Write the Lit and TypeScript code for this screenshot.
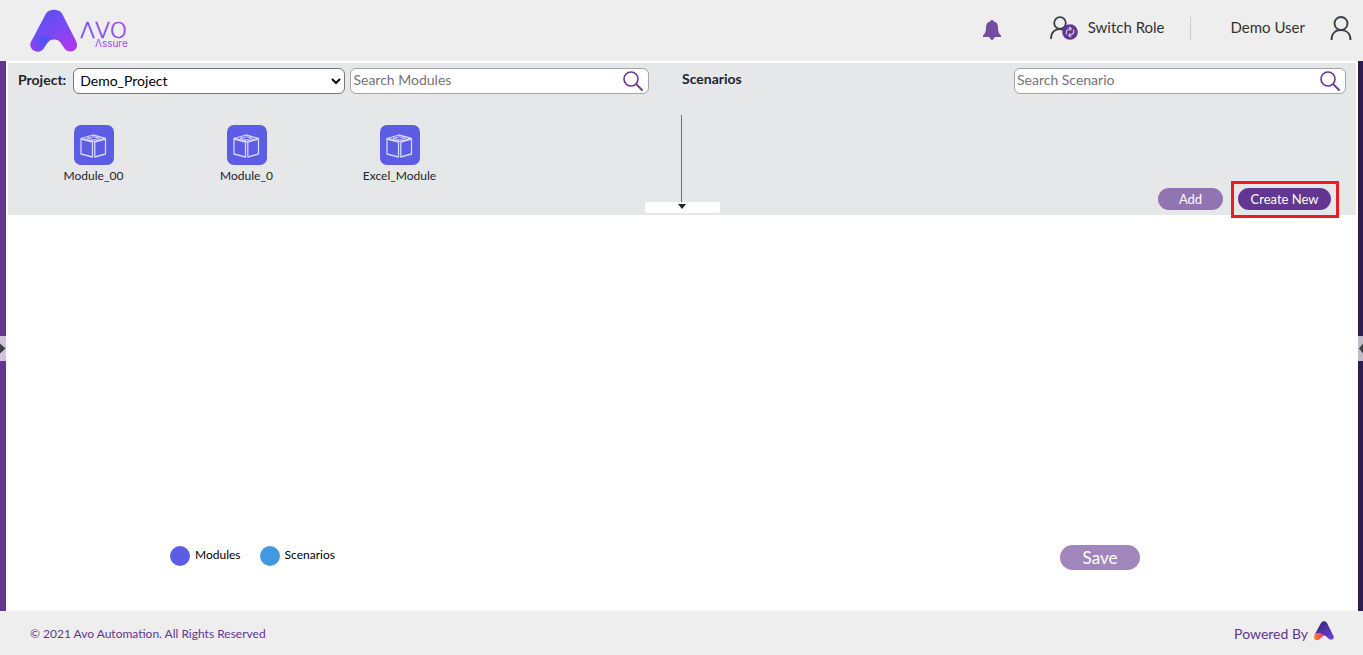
import { LitElement, html, css, svg } from "lit";
import { customElement, property } from "lit/decorators.js";

const searchIcon = svg`<svg class="glass" viewBox="0 0 20 20" width="20" height="20" aria-hidden="true">
  <circle cx="8" cy="8" r="7" fill="none" stroke="#633691" stroke-width="1.6" />
  <path d="M13.2 13.2L19 19" stroke="#633691" stroke-width="1.8" stroke-linecap="round" />
</svg>`;

@customElement("search-box")
export class SearchBox extends LitElement {
  @property() label = "";

  static styles = css`
    :host { display: block; }
    .box {
      display: flex;
      align-items: center;
      height: 26px;
      box-sizing: border-box;
      padding: 0 5px 0 2px;
      border: 1px solid #a5a5a5;
      border-radius: 6px;
      background: #fff;
    }
    input {
      flex: 1;
      min-width: 0;
      padding: 0 0 2px;
      border: 0;
      outline: 0;
      background: none;
      font: 14px/22px Lato, sans-serif;
      color: #212529;
    }
    input::placeholder { color: #757575; opacity: 1; }
    button { display: flex; padding: 0; border: 0; background: none; }
  `;

  render() {
    return html`<div class="box">
      <input type="text" aria-label=${this.label} placeholder=${this.label} />
      <button aria-label="Search">${searchIcon}</button>
    </div>`;
  }
}

@customElement("module-tile")
export class ModuleTile extends LitElement {
  @property() name = "";

  static styles = css`
    :host { display: block; }
    button {
      display: flex;
      flex-direction: column;
      align-items: center;
      width: 100%;
      padding: 0;
      border: 0;
      background: none;
      font: 12px/22px Lato, sans-serif;
      color: #212529;
    }
    svg { display: block; }
  `;

  render() {
    return html`<button>
      <svg viewBox="0 0 40 40" width="40" height="40" aria-hidden="true">
        <rect width="40" height="40" rx="7" fill="#5c5ce5" />
        <g fill="none" stroke="#d5d5f7" stroke-width="1.300" stroke-linejoin="round">
          <path d="M7 13.500L19 10l12.500 3.500L20 16.500z" />
          <path d="M13 13.300L19.500 11.800l6 1.500-5.800 1.500z" stroke-width="0.9" />
          <path d="M7 14v15l11.500 3V17z" />
          <path d="M31.500 14v15L20.800 32V17z" />
        </g>
      </svg>
      <span>${this.name}</span>
    </button>`;
  }
}

@customElement("app-root")
export class AppRoot extends LitElement {
  private modules = ["Module_00", "Module_0", "Excel_Module"];

  static styles = css`
    :host {
      display: flex;
      flex-direction: column;
      min-height: 100vh;
      font-family: Lato, sans-serif;
      font-size: 14px;
      color: #212529;
      background: #fff;
    }
    * { box-sizing: border-box; }
    button { font-family: inherit; border: 0; cursor: pointer; }

    .header {
      display: flex;
      align-items: center;
      justify-content: space-between;
      height: 61px;
      padding: 0 11px 0 29px;
      background: #eee;
    }
    .logo, .icon { display: block; }
    .tools { display: flex; align-items: center; padding-bottom: 5px; }
    .tool {
      display: flex;
      align-items: center;
      gap: 10px;
      padding: 0;
      background: none;
      font-size: 15px;
      line-height: 24px;
      color: #333;
    }
    .bell { margin: 4px 49px 0 0; }
    .rule { width: 1px; height: 23px; margin: 0 40px 0 25px; background: #ccc; }
    .user { gap: 25px; }
    .label { padding-bottom: 2px; }

    .body {
      flex: 1;
      display: flex;
      background: linear-gradient(90deg, #643693, #2f1c4f);
    }
    .rail { position: relative; flex: none; width: 6px; }
    .rail.right { width: 5px; }
    .handle {
      position: absolute;
      top: 50%;
      left: 0;
      width: 100%;
      height: 25px;
      padding: 0;
      background: rgba(255, 255, 255, 0.7);
    }
    .handle svg { display: block; width: 100%; height: 11px; }
    .main {
      flex: 1;
      min-width: 0;
      display: flex;
      flex-direction: column;
      padding: 2px 2px 0;
      background: #fff;
    }

    .panel {
      position: relative;
      display: grid;
      grid-template-columns: 1fr 1fr;
      height: 152px;
      background: #e5e7e9;
    }
    .bar { display: flex; align-items: center; height: 26px; margin-top: 5px; }
    .modules .bar { padding: 0 33px 0 10px; }
    .modules label { font-weight: 700; line-height: 20px; margin-right: 7px; padding-bottom: 2px; }
    .select {
      flex: 272 1 0;
      min-width: 0;
      height: 26px;
      margin-right: 5px;
      padding: 0 2px 2px;
      border: 1px solid #767676;
      border-radius: 6px;
      background-color: #fff;
      font: 14px Lato, sans-serif;
      color: #000;
    }
    .modules search-box { flex: 305 1 0; min-width: 0; }
    .tiles {
      display: grid;
      grid-template-columns: repeat(auto-fill, 153px);
      padding: 31px 0 0 9px;
    }
    .scenarios { display: flex; flex-direction: column; padding-right: 10px; }
    .scenarios .bar { justify-content: space-between; }
    .title { margin: 0; padding-bottom: 4px; font-size: 14px; line-height: 20px; font-weight: 700; }
    .scenarios search-box { width: 332px; }
    .lower {
      flex: 1;
      display: flex;
      align-items: flex-end;
      justify-content: flex-end;
      gap: 8px;
      margin: 21px 0 -3px -1px;
      padding-right: 7px;
      background: linear-gradient(#707070, #707070) 0 0 / 1px 88px no-repeat;
    }
    .pill {
      height: 22px;
      padding: 0;
      border-radius: 12px;
      background: #633691;
      font-size: 13px;
      line-height: 22px;
      color: #fff;
    }
    .add { width: 65px; margin-bottom: 8px; background: #9274b3; }
    .create { width: 93px; }
    .frame { display: flex; padding: 4px 5px 5px 4px; border: 3px solid #ed1c24; }
    .fold {
      position: absolute;
      left: 50%;
      bottom: 2px;
      width: 75px;
      height: 11px;
      margin-left: -37px;
      padding: 0 2px 2px 0;
      border-radius: 2px;
      background: #fff;
    }
    .fold svg { display: block; margin: auto; }

    .canvas {
      flex: 1;
      display: flex;
      align-items: flex-end;
      justify-content: space-between;
      padding: 0 216px 41px 162px;
    }
    .legend {
      display: flex;
      gap: 19px;
      margin: 0;
      padding: 0 0 4px;
      list-style: none;
      font-size: 12px;
      line-height: 18px;
      color: #000;
    }
    .legend li { display: flex; gap: 5px; }
    .dot { width: 20px; height: 20px; border-radius: 50%; background: #5c5ce5; }
    .dot.blue { background: #4299e1; }
    .save {
      width: 80px;
      height: 25px;
      padding: 0;
      border-radius: 13px;
      background: #a186bb;
      font-size: 17px;
      line-height: 24px;
      color: #fff;
    }

    .footer {
      display: flex;
      align-items: center;
      justify-content: space-between;
      height: 44px;
      padding: 0 28px 0 30px;
      background: #eee;
      font-size: 12px;
      color: #633691;
    }
    .powered { display: flex; align-items: center; gap: 5px; font-size: 14px; }
    .powered svg { margin-bottom: 5px; }
  `;

  render() {
    return html`
      <header class="header">
        <svg class="logo" viewBox="0 0 102 46" width="102" height="46" role="img" aria-label="Avo Assure">
          <defs>
            <linearGradient id="mark" x1="0.2" y1="0" x2="0.9" y2="1">
              <stop offset="0" stop-color="#5a50f5" />
              <stop offset="0.5" stop-color="#7a49f3" />
              <stop offset="1" stop-color="#b336f2" />
            </linearGradient>
            <linearGradient id="fold" x1="0" y1="0.7" x2="1" y2="0.3">
              <stop offset="0" stop-color="#963ff5" />
              <stop offset="0.6" stop-color="#4b55f5" />
              <stop offset="1" stop-color="#7a49f3" />
            </linearGradient>
            <linearGradient id="word" x1="0" y1="0" x2="1" y2="0">
              <stop offset="0" stop-color="#6a4cec" />
              <stop offset="1" stop-color="#a23cf0" />
            </linearGradient>
          </defs>
          <path fill="url(#mark)" d="M17 5.500C20 .5 30 .5 33 5.500L47 33c3 6-1 10.500-5.500 10.500-3 0-4.500-1-6-3l-4-6c-3-4.500-10-4.500-13 0l-4 6c-1.500 2-3 3-6 3-5 0-9-5-6-10.500z" />
          <path fill="url(#fold)" d="M6 28c8-1.500 18 0 23 4-4-1.500-8-1-10.500 2.500l-4 6c-1.500 2-3 3-6 3-5 0-9-5-6-10.500z" />
          <text x="51" y="30" font-family="DejaVu Sans, sans-serif" font-weight="200" font-size="22" fill="url(#word)" stroke="url(#word)" stroke-width="0.6">ΛVO</text>
          <text x="66" y="39" font-family="Inter, sans-serif" font-size="10" fill="#a04bef">Λssure</text>
        </svg>
        <div class="tools">
          <button class="tool bell" aria-label="Notifications">
            <svg class="icon" viewBox="0 0 18 20" width="18" height="20">
              <path fill="#764ba2" d="M9 0c1 0 1.600.6 1.800 1.400C13.800 2 15 4.500 15 7c0 4.500.8 6.500 3 8.500V17h-6.200C11 18 10 20 9 20s-2-2-2.800-3H0v-1.500C2.200 13.500 3 11.500 3 7c0-2.500 1.200-5 4.200-5.600C7.400.6 8 0 9 0z" />
            </svg>
          </button>
          <button class="tool">
            <svg class="icon" viewBox="0 0 28 24" width="28" height="24" aria-hidden="true">
              <g fill="none" stroke="#3b4048" stroke-width="1.800">
                <circle cx="10" cy="7" r="5.800" />
                <path d="M1 23c0-7 4-10 9-10 3 0 5 1 7 3" />
              </g>
              <circle cx="20" cy="16" r="7.800" fill="#633691" />
              <g fill="none" stroke="#d9c9ea" stroke-width="1.200">
                <path d="M16.500 18.500c-1-3 .5-5.500 4.500-6m-2-1.500l2.200 1.400-1.400 2.200" />
                <path d="M23.500 13.500c1 3-.5 5.500-4.500 6m2 1.500l-2.200-1.400 1.400-2.200" />
              </g>
            </svg>
            <span class="label">Switch Role</span>
          </button>
          <span class="rule"></span>
          <button class="tool user">
            <span class="label">Demo User</span>
            <svg class="icon" viewBox="0 0 22 24" width="22" height="24" aria-hidden="true">
              <g fill="none" stroke="#3b4048" stroke-width="1.900">
                <circle cx="11" cy="7.500" r="6.500" />
                <path d="M1.500 24c0-6.500 4-10 9.500-10s9.500 3.500 9.500 10" />
              </g>
            </svg>
          </button>
        </div>
      </header>

      <div class="body">
        <div class="rail">
          <button class="handle" aria-label="Open left bar">
            <svg viewBox="0 0 6 11"><path d="M0 0.500L5.500 5.500 0 10.500z" fill="#404040" /></svg>
          </button>
        </div>
        <main class="main">
          <div class="panel">
            <section class="modules">
              <div class="bar">
                <label for="project">Project:</label>
                <select class="select" id="project"><option>Demo_Project</option></select>
                <search-box label="Search Modules"></search-box>
              </div>
              <div class="tiles">
                ${this.modules.map((m) => html`<module-tile .name=${m}></module-tile>`)}
              </div>
            </section>
            <section class="scenarios">
              <div class="bar">
                <h2 class="title">Scenarios</h2>
                <search-box label="Search Scenario"></search-box>
              </div>
              <div class="lower">
                <button class="pill add">Add</button>
                <div class="frame"><button class="pill create">Create New</button></div>
              </div>
            </section>
            <button class="fold" aria-label="Collapse panel">
              <svg viewBox="0 0 8 5" width="8" height="5"><path d="M0 0h8L4 5z" fill="#212529" /></svg>
            </button>
          </div>
          <div class="canvas">
            <ul class="legend">
              <li><span class="dot"></span>Modules</li>
              <li><span class="dot blue"></span>Scenarios</li>
            </ul>
            <button class="save">Save</button>
          </div>
        </main>
        <div class="rail right">
          <button class="handle" aria-label="Open right bar">
            <svg viewBox="0 0 5 11"><path d="M5 0.500L1 5.500 5 10.500z" fill="#404040" /></svg>
          </button>
        </div>
      </div>

      <footer class="footer">
        <span>© 2021 Avo Automation. All Rights Reserved</span>
        <span class="powered">
          Powered By
          <svg viewBox="0 0 22 20" width="22" height="20" role="img" aria-label="Avo">
            <defs>
              <linearGradient id="peak" x1="0.3" y1="0" x2="0.9" y2="1">
                <stop offset="0" stop-color="#35277c" />
                <stop offset="1" stop-color="#7040e0" />
              </linearGradient>
              <linearGradient id="ember" x1="0" y1="0" x2="1" y2="0">
                <stop offset="0" stop-color="#f58a2c" />
                <stop offset="1" stop-color="#e0237c" />
              </linearGradient>
            </defs>
            <path fill="url(#peak)" d="M8 2c1.500-2.500 4.500-2.500 6 0l6.500 13c1.200 3-2 5-4.500 3l-4-3.500C8 12 4 12 2 13z" />
            <path fill="url(#ember)" d="M2 13c4-1.500 8-.5 10.500 1.800-1.500-.3-2.500.2-3.500 1.200-2 2.500-4 3.500-6 3s-3-2.500-1-6z" />
          </svg>
        </span>
      </footer>
    `;
  }
}
